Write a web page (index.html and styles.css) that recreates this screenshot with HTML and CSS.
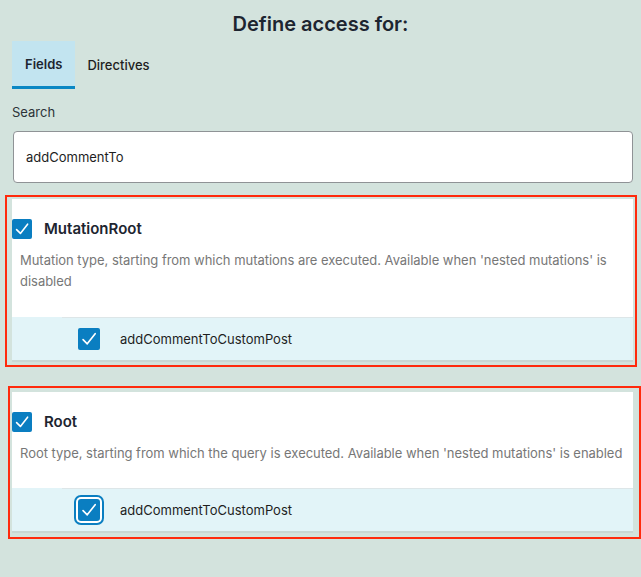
FILE: index.html
```html
<!DOCTYPE html>
<html lang="en">
<head>
<meta charset="utf-8">
<title>Define access for</title>
<link rel="stylesheet" href="styles.css">
</head>
<body>
<div class="page">
  <h2 class="title">Define access for:</h2>
  <div class="tabs">
    <div class="tab active">Fields</div>
    <div class="tab">Directives</div>
  </div>
  <div class="search-label">Search</div>
  <div class="search"><span class="search-value">addCommentTo</span></div>

  <div class="highlight highlight-one">
    <section class="panel">
      <div class="panel-head">
        <span class="cb"><svg viewBox="0 0 20 20" width="20" height="20"><path d="M4.6 10.6 L8.4 14.4 L15.6 5.2" fill="none" stroke="#fff" stroke-width="1.6" stroke-linecap="round" stroke-linejoin="round"/></svg></span>
        <span class="type-name">MutationRoot</span>
      </div>
      <p class="desc">Mutation type, starting from which mutations are executed. Available when 'nested mutations' is disabled</p>
      <ul class="fields">
        <li class="field">
          <span class="cb cb-item"><svg viewBox="0 0 20 20" width="22" height="22"><path d="M4.6 10.6 L8.4 14.4 L15.6 5.2" fill="none" stroke="#fff" stroke-width="1.5" stroke-linecap="round" stroke-linejoin="round"/></svg></span>
          <span class="field-name">addCommentToCustomPost</span>
        </li>
      </ul>
    </section>
  </div>

  <div class="highlight highlight-two">
    <section class="panel">
      <div class="panel-head">
        <span class="cb"><svg viewBox="0 0 20 20" width="20" height="20"><path d="M4.6 10.6 L8.4 14.4 L15.6 5.2" fill="none" stroke="#fff" stroke-width="1.6" stroke-linecap="round" stroke-linejoin="round"/></svg></span>
        <span class="type-name">Root</span>
      </div>
      <p class="desc">Root type, starting from which the query is executed. Available when 'nested mutations' is enabled</p>
      <ul class="fields">
        <li class="field">
          <span class="cb cb-item cb-focus"><svg viewBox="0 0 20 20" width="22" height="22"><path d="M4.6 10.6 L8.4 14.4 L15.6 5.2" fill="none" stroke="#fff" stroke-width="1.5" stroke-linecap="round" stroke-linejoin="round"/></svg></span>
          <span class="field-name">addCommentToCustomPost</span>
        </li>
      </ul>
    </section>
  </div>
</div>
</body>
</html>
```

FILE: styles.css
```css
* { box-sizing: border-box; }

html, body {
  margin: 0;
  padding: 0;
  background: #d3e3dd;
}

body {
  font-family: Inter, "Noto Sans", "Liberation Sans", sans-serif;
  color: #1e1e1e;
  width: 641px;
  height: 577px;
  overflow: hidden;
}

.page {
  padding: 0 8px 0 12px;
}

.title {
  margin: 12px 0 0;
  font-size: 20px;
  line-height: 24px;
  font-weight: 600;
  text-align: center;
  color: #1d2530;
  padding-right: 4px;
}

.tabs {
  display: flex;
  margin-top: 5px;
  height: 48px;
}

.tab {
  display: flex;
  align-items: center;
  padding: 2px 12px 0;
  font-size: 13px;
  font-weight: 500;
  color: #1e1e1e;
  border-bottom: 3px solid transparent;
}

.tab.active {
  background: #c2e4f0;
  border-bottom-color: #0a87c4;
  font-weight: 600;
  padding: 0 13px;
  color: #1d2530;
}

.search-label {
  margin-top: 13px;
  font-size: 13px;
  line-height: 20px;
  color: #2c3338;
}

.search {
  margin: 9px 0 0 1px;
  height: 52px;
  background: #fff;
  border: 1px solid #8f9396;
  border-radius: 4px;
  display: flex;
  align-items: center;
  padding: 0 12px;
  font-size: 13px;
  color: #1e1e1e;
}

.highlight {
  border: 2px solid #ff2a0c;
}

.highlight-one {
  margin: 12px -4px 0 -7px;
  padding: 2px 2px 3px 5px;
}

.highlight-two {
  margin: 19px -8px 0 -4px;
  padding: 4px 6px 4px 2px;
}

.panel {
  background: #fff;
  padding-top: 19px;
}

.panel-head {
  display: flex;
  align-items: center;
  height: 21px;
}

.cb {
  width: 20px;
  height: 20px;
  border-radius: 2px;
  background: #0a7ec1;
  display: flex;
  align-items: center;
  justify-content: center;
  flex: none;
}

.cb svg { display: block; }

.type-name {
  margin-left: 12px;
  font-size: 15px;
  font-weight: 600;
  color: #1d2530;
}

.desc {
  margin: 11px 0 0;
  padding: 0 1px 0 8px;
  font-size: 13px;
  line-height: 21px;
  color: #777;
  letter-spacing: -0.03px;
}

.highlight-one .desc { margin-bottom: 25px; }
.highlight-two .desc { margin-bottom: 24px; }

.fields {
  list-style: none;
  margin: 0;
  padding: 0 0 0 50px;
  background: #e2f4f8;
  border-bottom: 2px solid #c9d7d4;
}

.field {
  display: flex;
  align-items: center;
  height: 43px;
  border-top: 1px solid #dde6e8;
  padding-left: 16px;
}

.cb-item {
  width: 22px;
  height: 22px;
}

.cb-focus {
  box-shadow: 0 0 0 2px #fff, 0 0 0 4px #0a7ec1;
  border-radius: 3px;
}

.field-name {
  margin-left: 20px;
  font-size: 13px;
  color: #1e1e1e;
}
```
